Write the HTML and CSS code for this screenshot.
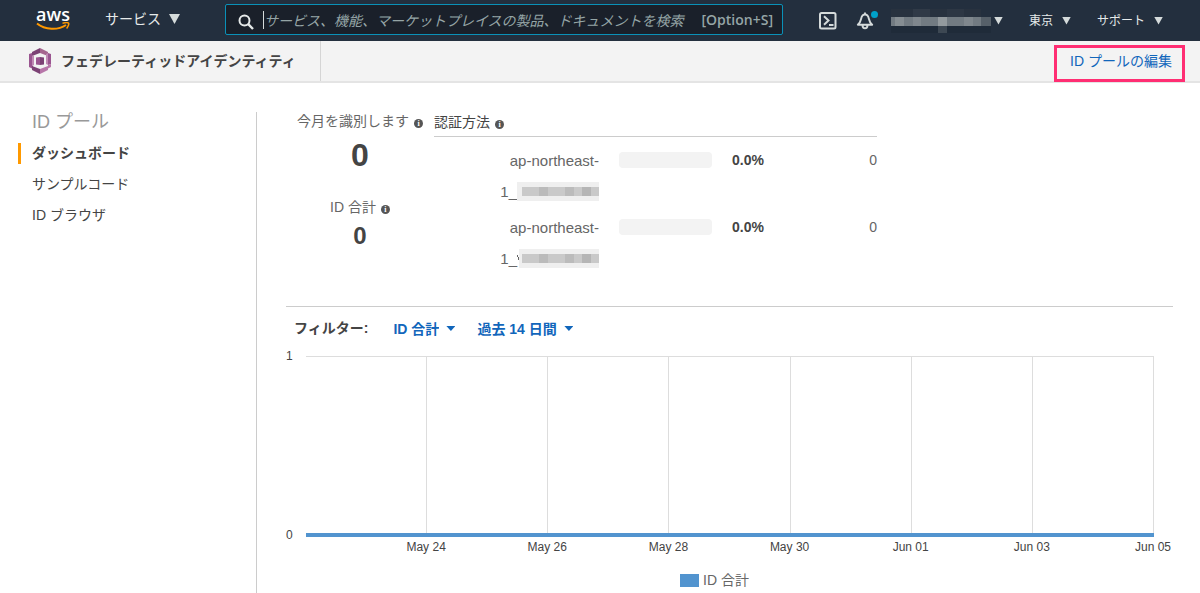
FILE: index.html
```html
<!DOCTYPE html>
<html lang="ja">
<head>
<meta charset="utf-8">
<title>フェデレーティッドアイデンティティ</title>
<link rel="stylesheet" href="styles.css">
</head>
<body>
<header class="topbar">
  <a class="logo" href="#" aria-label="AWS ホーム">
    <span class="logo-text">aws</span>
    <svg class="logo-smile" width="34" height="9" viewBox="0 0 34 9" fill="none" stroke="#ff9900">
      <path d="M1 1.5C9 8 22 8.500 30 3" stroke-width="2"/>
      <path d="M26.500 1.200C29 .6 32 .4 32.600 1.200S32 5 30.600 6.500" stroke-width="1.500"/>
    </svg>
  </a>
  <button class="nav-button services" type="button">サービス<span class="arrow arrow-large"></span></button>
  <div class="search">
    <svg class="search-icon" width="16" height="16" viewBox="0 0 16 16" fill="none" stroke="#e6eaea" stroke-width="2">
      <circle cx="6.500" cy="6.500" r="5"/><path d="M10.200 10.200L15 15" stroke-width="2.400"/>
    </svg>
    <input class="search-input" type="text" aria-label="検索" placeholder="サービス、機能、マーケットプレイスの製品、ドキュメントを検索">
    <span class="search-key">[Option+S]</span>
  </div>
  <nav class="topnav">
    <button class="icon-button" type="button" aria-label="CloudShell">
      <svg width="18" height="18" viewBox="0 0 18 18" fill="none" stroke="#d5dbdb" stroke-width="2">
        <rect x="1" y="1" width="15.500" height="15.500" rx="1.500"/><path d="M5 4.300l4.500 4.200L5 12.700M10 13h4.500"/>
      </svg>
    </button>
    <button class="icon-button bell" type="button" aria-label="通知">
      <svg width="18" height="18" viewBox="0 0 18 18" fill="none" stroke="#d5dbdb" stroke-width="1.900" stroke-linejoin="round">
        <path d="M9 .5v2M1.800 12.700h14.400C13.500 10.500 13.300 9 12.800 6.500 12.300 4 11 2.500 9 2.500S5.700 4 5.200 6.500C4.700 9 4.500 10.500 1.800 12.700zM6.500 13c0 4.500 5 4.500 5 0"/>
      </svg>
      <span class="bell-dot"></span>
    </button>
    <button class="nav-button account" type="button" aria-label="アカウント">
      <svg width="100" height="24" viewBox="0 0 100 24" shape-rendering="crispEdges">
        <rect width="90" height="8" fill="#28323f"/><rect x="22" width="17" height="8" fill="#303a47"/><rect x="56" width="17" height="8" fill="#2d3744"/>
        <rect y="8" width="100" height="9" fill="#727b82"/><rect x="4" y="8" width="9" height="9" fill="#858d92"/><rect x="22" y="8" width="8" height="9" fill="#7f878d"/><rect x="47" y="8" width="9" height="9" fill="#939a9e"/><rect x="73" y="8" width="9" height="9" fill="#7f878d"/><rect x="90" y="8" width="10" height="9" fill="#566069"/>
        <rect y="17" width="100" height="7" fill="#1f2b39"/><rect x="47" y="17" width="9" height="7" fill="#3d4853"/>
      </svg>
      <span class="arrow"></span>
    </button>
    <button class="nav-button region" type="button">東京<span class="arrow"></span></button>
    <button class="nav-button support" type="button">サポート<span class="arrow"></span></button>
  </nav>
</header>

<div class="servicebar">
  <a class="service" href="#">
    <svg width="24" height="26" viewBox="0 0 24 26">
      <path d="M12 0L4 4v4l8-3z" fill="#7c4275"/><path d="M12 0l8 4v4l-8-3z" fill="#a5668f"/>
      <path d="M1 6l3-1v12l1 1v3l-4-2z" fill="#9a5590"/><path d="M4 8l2-1v10l-2 1z" fill="#c08ab4"/>
      <path d="M23 6l-3-1v12l3-1z" fill="#9a5590"/><path d="M20 5l-2 1v10l2 1z" fill="#c08ab4"/><path d="M20 17l3-1v3l-3 1.500z" fill="#b776a9"/>
      <path d="M4 18l8 3v5l-8-4z" fill="#7c4275"/><path d="M12 21l8-3v4l-8 4z" fill="#b776a9"/>
      <path d="M8 9.500l4-.5v8l-4-.5z" fill="#9a5590"/><path d="M12 9l4 .5v7l-4 .5z" fill="#7c4275"/>
    </svg>
    <span>フェデレーティッドアイデンティティ</span>
  </a>
  <a class="edit-link" href="#">ID プールの編集</a>
</div>

<div class="page">
  <nav class="sidebar">
    <h2 class="sidebar-title">ID プール</h2>
    <a class="side-link side-link-active" href="#">ダッシュボード</a>
    <a class="side-link" href="#">サンプルコード</a>
    <a class="side-link" href="#">ID ブラウザ</a>
  </nav>
  <main class="content">
    <section class="summary">
      <div class="stats">
        <h3 class="stat-label">今月を識別します<span class="info">i</span></h3>
        <p class="stat-value">0</p>
        <h3 class="stat-label">ID 合計<span class="info">i</span></h3>
        <p class="stat-value stat-value-small">0</p>
      </div>
      <div class="methods">
        <h3 class="methods-title">認証方法<span class="info">i</span></h3>
        <table class="methods-table">
          <tr>
            <td class="provider">ap-northeast-<br><span class="masked">1_<svg width="82" height="19" viewBox="0 0 82 19" shape-rendering="crispEdges"><rect width="82" height="19" fill="#efefef"/><rect x="5" y="5" width="77" height="9" fill="#c9c9c9"/><rect x="22" y="5" width="9" height="9" fill="#bbb"/><rect x="48" y="5" width="9" height="9" fill="#bbb"/><rect x="65" y="5" width="9" height="9" fill="#b5b5b5"/></svg></span></td>
            <td class="bar-cell"><div class="bar"></div></td>
            <td class="percent">0.0%</td>
            <td class="count">0</td>
          </tr>
          <tr>
            <td class="provider">ap-northeast-<br><span class="masked">1_<svg width="82" height="19" viewBox="0 0 82 19" shape-rendering="crispEdges"><rect x="2" width="80" height="19" fill="#efefef"/><rect x="5" y="5" width="77" height="9" fill="#c9c9c9"/><rect x="22" y="5" width="9" height="9" fill="#bbb"/><rect x="48" y="5" width="9" height="9" fill="#bbb"/><rect x="65" y="5" width="9" height="9" fill="#b5b5b5"/><path d="M0 6h1l1 4v2z" fill="#666"/></svg></span></td>
            <td class="bar-cell"><div class="bar"></div></td>
            <td class="percent">0.0%</td>
            <td class="count">0</td>
          </tr>
        </table>
      </div>
    </section>

    <section class="trend">
      <div class="filters">
        <label class="filters-label" for="metric">フィルター:</label>
        <div class="filter"><select id="metric"><option>ID 合計</option></select><span class="caret"></span></div>
        <div class="filter"><select aria-label="期間"><option>過去 14 日間</option></select><span class="caret"></span></div>
      </div>
      <div class="chart">
        <div class="y-axis"><span>1</span><span>0</span></div>
        <div class="plot"><i></i><i></i><i></i><i></i><i></i><i></i><i></i></div>
        <div class="x-axis"><span>May 24</span><span>May 26</span><span>May 28</span><span>May 30</span><span>Jun 01</span><span>Jun 03</span><span>Jun 05</span></div>
      </div>
      <div class="legend"><span class="swatch"></span>ID 合計</div>
    </section>
  </main>
</div>
</body>
</html>
```
FILE: styles.css
```css
* { box-sizing: border-box; }
body {
  margin: 0;
  min-height: 100vh;
  display: flex;
  flex-direction: column;
  font: 14px/31px "Liberation Sans", "Noto Sans CJK JP", sans-serif;
  color: #444;
  background: #fff;
}
a { color: inherit; text-decoration: none; }
button { padding: 0; border: 0; background: none; font: inherit; color: inherit; cursor: pointer; }
h2, h3, p { margin: 0; font-weight: 400; }
svg { display: block; flex: none; }

.topbar {
  display: flex;
  align-items: center;
  height: 41px;
  padding: 0 37px 0 36px;
  background: #232f3e;
  color: #e6eaea;
}
.logo { display: flex; flex-direction: column; align-items: center; width: 34px; margin-bottom: 5px; }
.logo-text { font: 600 18px/16px "Open Sans", sans-serif; color: #fff; }
.nav-button { display: flex; align-items: center; font-size: 12px; line-height: 20px; white-space: nowrap; }
.services { gap: 8px; margin: 0 45px 3px 35px; font-size: 14px; }
.arrow { width: 9px; height: 8px; background: #d5dbdb; clip-path: polygon(0 0, 100% 0, 50% 100%); }
.arrow-large { width: 11px; height: 10px; }
.search {
  flex: 1;
  display: flex;
  align-items: center;
  max-width: 558px;
  height: 31px;
  margin-bottom: 2px;
  padding: 0 9px 0 12px;
  border: 1px solid #0a91b8;
  border-radius: 2px;
  background: #1a202a;
}
.search-icon { margin: 4px 9px 0 0; }
.search-input {
  flex: 1;
  min-width: 0;
  height: 18px;
  padding: 0;
  border: 0;
  border-left: 1px solid #d5dbdb;
  outline: 0;
  background: none;
  font: 14px/18px "Noto Sans CJK JP", sans-serif;
  color: #fff;
}
.search-input::placeholder { color: #95a5a6; font-style: italic; opacity: 1; }
.search-key { margin-left: 7px; font: 600 14px/20px "Open Sans", sans-serif; color: #95a5a6; }
.topnav { display: flex; align-items: center; margin-left: auto; padding-left: 24px; }
.icon-button { position: relative; margin-right: 19px; }
.bell { margin-right: 17px; }
.bell-dot { position: absolute; top: -1px; right: -4px; width: 7px; height: 7px; border-radius: 50%; background: #00a1c9; }
.account { gap: 3px; margin-right: 26px; }
.region { gap: 9px; margin-right: 26px; }
.support { gap: 9px; }

.servicebar {
  display: flex;
  justify-content: space-between;
  height: 42px;
  padding-right: 15px;
  border-bottom: 2px solid #e4e4e4;
  background: #f3f3f3;
}
.service {
  display: flex;
  align-items: center;
  gap: 9px;
  padding: 0 24px 0 28px;
  border-right: 1px solid #d5d5d5;
  font-weight: 700;
}
.edit-link {
  height: 37px;
  margin-top: 4px;
  padding: 0 10px 0 13px;
  border: 3px solid #ff2e73;
  line-height: 27px;
  color: #1166bb;
}

.page { flex: 1; display: flex; padding-top: 29px; }
.sidebar { width: 257px; flex: none; padding-left: 18px; border-right: 1px solid #ccc; }
.sidebar-title { padding-left: 14px; font-size: 18px; line-height: 20px; color: #999; margin-bottom: 6px; }
.side-link { display: flex; align-items: center; height: 31px; }
.side-link::before { content: ""; width: 3px; height: 21px; margin-right: 11px; }
.side-link-active { font-weight: 700; }
.side-link-active::before { background: #ff9900; }
.content { flex: 1; min-width: 0; padding: 0 27px 0 29px; }

.summary { display: flex; height: 194px; }
.stats { width: 148px; text-align: center; color: #666; }
.stat-label { font-size: 14px; line-height: 18px; white-space: nowrap; }
.stat-value { height: 68px; font-size: 32px; line-height: 50px; font-weight: 700; color: #444; }
.stat-value-small { font-size: 24px; line-height: 40px; }
.info {
  display: inline-block;
  width: 9px;
  height: 9px;
  margin-left: 5px;
  border-radius: 50%;
  background: #555;
  font: 700 8px/9px "Liberation Serif", serif;
  text-align: center;
  vertical-align: 0;
  color: #fff;
}
.methods { width: 443px; }
.methods-title { height: 25px; border-bottom: 1px solid #ccc; font-size: 14px; line-height: 20px; }
.methods-table { width: 100%; margin-top: 8px; border-collapse: collapse; color: #666; }
.methods-table td { padding: 0 0 5px; vertical-align: top; }
.methods-table .provider { width: 165px; font-size: 15px; text-align: right; }
.masked { display: flex; justify-content: flex-end; align-items: center; }
.bar-cell { width: 133px; }
.methods-table .bar { width: 93px; height: 16px; margin: 7px 20px; border-radius: 4px; background: #f3f3f3; }
.percent { font-weight: 700; color: #444; }
.count { text-align: right; }

.trend { border-top: 1px solid #ccc; }
.filters { display: flex; align-items: center; height: 43px; padding-left: 8px; }
.filters-label { margin-right: 25px; font-weight: 700; }
.filter { display: flex; align-items: center; gap: 7px; margin-right: 22px; }
.filter select {
  appearance: none;
  padding: 0;
  border: 0;
  background: none;
  font: 700 14px/20px "Liberation Sans", "Noto Sans CJK JP", sans-serif;
  color: #1166bb;
}
.caret { width: 9px; height: 5px; background: #1166bb; clip-path: polygon(0 0, 100% 0, 50% 100%); }
.chart {
  display: grid;
  grid-template-columns: 20px 1fr;
  padding: 6px 19px 0 0;
  font-size: 12px;
  line-height: 20px;
}
.y-axis { display: flex; flex-direction: column; justify-content: space-between; margin: -10px 0 -8px; }
.plot { display: grid; grid-template-columns: repeat(7, 1fr); height: 181px; border-top: 1px solid #ddd; border-bottom: 4px solid #5294cf; }
.plot i { border-right: 1px solid #ddd; }
.x-axis { grid-column: 2; display: grid; grid-template-columns: repeat(7, 1fr); }
.x-axis span { justify-self: end; width: 60px; margin-right: -29px; text-align: center; }
.legend { display: flex; align-items: center; justify-content: center; gap: 4px; padding: 13px 30px 0 0; line-height: 20px; color: #666; }
.swatch { width: 19px; height: 13px; background: #5294cf; }
```
